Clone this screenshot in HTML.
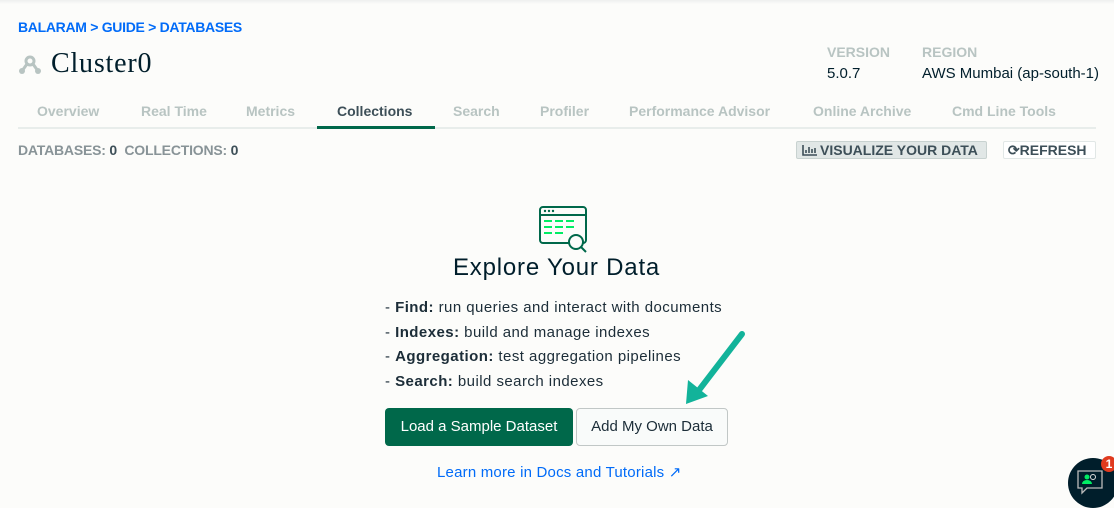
<!DOCTYPE html>
<html><head><style>
body{margin:0;width:1114px;height:504px;background:#fcfcfa;font-family:"Liberation Sans",sans-serif;position:relative;overflow:hidden}
.a{position:absolute;white-space:nowrap}
.tab{position:absolute;top:103px;font-size:14px;font-weight:bold;color:#b8c4c2}
.li{font-size:15px;color:#1c2d38;letter-spacing:0.45px}
</style></head><body>
<div class="a" style="left:0;top:0;width:1114px;height:4px;background:linear-gradient(#eef0ef,#fcfcfa)"></div>
<div class="a" style="left:18px;top:19px;font-size:14px;font-weight:bold;color:#016bf8;letter-spacing:-0.3px">BALARAM &gt; GUIDE &gt; DATABASES</div>
<svg class="a" style="left:18px;top:55px" width="24" height="20" viewBox="0 0 24 20"><circle cx="12" cy="6" r="4" fill="none" stroke="#b8c4c2" stroke-width="3"/><path d="M9 9 L4 16 M15 9 L20 16" stroke="#b8c4c2" stroke-width="3"/><circle cx="4" cy="16" r="3" fill="#b8c4c2"/><circle cx="20" cy="16" r="3" fill="#b8c4c2"/></svg>
<div class="a" style="left:51px;top:48px;font-size:28px;font-family:'Liberation Serif',serif;color:#001e2b;letter-spacing:0.8px">Cluster0</div>
<div class="a" style="left:827px;top:44px;font-size:14px;font-weight:bold;color:#b8c4c2">VERSION</div>
<div class="a" style="left:922px;top:44px;font-size:14px;font-weight:bold;color:#b8c4c2">REGION</div>
<div class="a" style="left:827px;top:65px;font-size:15px;color:#001e2b">5.0.7</div>
<div class="a" style="left:922px;top:65px;font-size:15px;color:#001e2b">AWS Mumbai (ap-south-1)</div>
<div class="tab" style="left:37px">Overview</div>
<div class="tab" style="left:141px">Real Time</div>
<div class="tab" style="left:246px">Metrics</div>
<div class="tab" style="left:337px;color:#3d4f58">Collections</div>
<div class="tab" style="left:453px">Search</div>
<div class="tab" style="left:540px">Profiler</div>
<div class="tab" style="left:629px">Performance Advisor</div>
<div class="tab" style="left:813px">Online Archive</div>
<div class="tab" style="left:952px">Cmd Line Tools</div>
<div class="a" style="left:18px;top:127px;width:1078px;height:2px;background:#e8edeb"></div>
<div class="a" style="left:317px;top:126px;width:118px;height:3px;background:#00684a"></div>
<div class="a" style="left:18px;top:142px;font-size:14px;font-weight:bold;color:#889397;letter-spacing:-0.2px">DATABASES: <span style="color:#3d4f58">0</span>&nbsp; COLLECTIONS: <span style="color:#3d4f58">0</span></div>
<div class="a" style="left:796px;top:141px;width:189px;height:16px;background:#e1e7e6;border:1px solid #c8d2d0;border-radius:2px;font-size:14px;font-weight:bold;color:#3d4f58;line-height:16px"><svg width="16" height="12" viewBox="0 0 16 12" style="margin:0 2px 0 5px;vertical-align:-1px"><path d="M1 1v10h14M4 9V6M7 9V3M10 9V5M13 9V4" stroke="#3d4f58" stroke-width="1.6" fill="none"/></svg>VISUALIZE YOUR DATA</div>
<div class="a" style="left:1003px;top:141px;width:91px;height:16px;background:#fff;border:1px solid #e1e7e6;border-radius:2px;font-size:14px;font-weight:bold;color:#3d4f58;line-height:16px">&nbsp;⟳REFRESH</div>
<svg class="a" style="left:538px;top:205px" width="52" height="50" viewBox="0 0 52 50"><rect x="2" y="2" width="46" height="36" rx="3" fill="none" stroke="#00684a" stroke-width="2"/><path d="M2 10h46" stroke="#00684a" stroke-width="2"/><circle cx="7" cy="6" r="1.2" fill="#00684a"/><circle cx="11" cy="6" r="1.2" fill="#00684a"/><circle cx="15" cy="6" r="1.2" fill="#00684a"/><path d="M6 16h8M17 16h8M28 16h8M6 22h8M17 22h8M28 22h8M6 28h8M17 28h8" stroke="#00ed64" stroke-width="2"/><circle cx="38" cy="37" r="7" fill="#fcfcfa" stroke="#00684a" stroke-width="2"/><path d="M43 42l5 5" stroke="#00684a" stroke-width="2"/></svg>
<div class="a" style="left:453px;top:254px;font-size:24px;color:#001e2b;letter-spacing:0.8px">Explore Your Data</div>
<div class="a li" style="left:385px;top:299px">- <b>Find:</b> run queries and interact with documents</div>
<div class="a li" style="left:385px;top:324px">- <b>Indexes:</b> build and manage indexes</div>
<div class="a li" style="left:385px;top:348px">- <b>Aggregation:</b> test aggregation pipelines</div>
<div class="a li" style="left:385px;top:373px">- <b>Search:</b> build search indexes</div>
<div class="a" style="left:385px;top:408px;width:188px;height:38px;background:#00684a;border-radius:4px;color:#fff;font-size:15px;line-height:38px;text-align:center">Load a Sample Dataset</div>
<div class="a" style="left:576px;top:408px;width:150px;height:36px;background:#f9fbfa;border:1px solid #c1c7c6;border-radius:4px;color:#1c2d38;font-size:15px;line-height:36px;text-align:center">Add My Own Data</div>
<svg class="a" style="left:680px;top:328px" width="70" height="80" viewBox="0 0 70 80"><path d="M62 6 L16 66" stroke="#12b39a" stroke-width="6" stroke-linecap="round"/><path d="M6 76 L8 52 L28 68 Z" fill="#12b39a"/></svg>
<div class="a" style="left:437px;top:463px;font-size:15px;color:#016bf8;letter-spacing:0.2px">Learn more in Docs and Tutorials ↗</div>
<div class="a" style="left:1068px;top:458px;width:50px;height:50px;border-radius:50%;background:#001e2b"></div>
<svg class="a" style="left:1075px;top:468px" width="30" height="30" viewBox="0 0 30 30"><path d="M3 3h24v17H12l-5 5v-5H3z" fill="none" stroke="#bbb" stroke-width="1.3"/><circle cx="12" cy="9" r="2.5" fill="#00ed64"/><path d="M7 16a5 4 0 0 1 10 0z" fill="#00ed64"/><circle cx="18" cy="9" r="2.5" fill="none" stroke="#ddd"/></svg>
<div class="a" style="left:1101px;top:456px;width:16px;height:16px;border-radius:50%;background:#e03a1e;color:#fff;font-size:12px;font-weight:bold;text-align:center;line-height:16px">1</div>
</body></html>
